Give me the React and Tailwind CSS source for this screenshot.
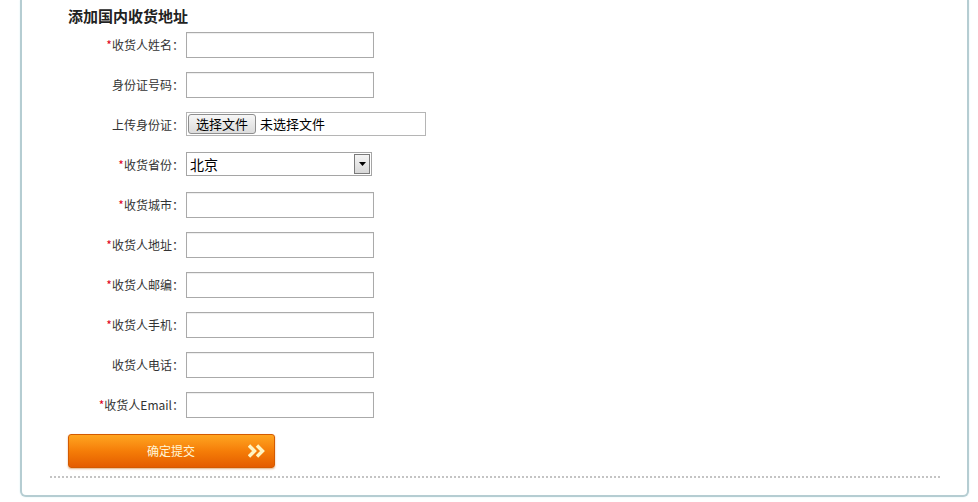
const fields = [
  { label: '收货人姓名', req: true },
  { label: '身份证号码', req: false },
  { label: '上传身份证', req: false, type: 'file' },
  { label: '收货省份', req: true, type: 'select' },
  { label: '收货城市', req: true },
  { label: '收货人地址', req: true },
  { label: '收货人邮编', req: true },
  { label: '收货人手机', req: true },
  { label: '收货人电话', req: false },
  { label: '收货人Email', req: true },
]

function Field({ type }) {
  if (type === 'file') {
    return (
      <div className="flex h-[24px] w-[240px] items-center border border-[#b5b5b5] bg-white pl-[1px]">
        <div className="flex h-[20px] items-center rounded-[3px] border border-[#8e8e8e] bg-gradient-to-b from-[#f6f6f6] to-[#dcdcdc] px-[7px] text-[13px] text-black">
          选择文件
        </div>
        <span className="ml-[4px] text-[13px] text-black">未选择文件</span>
      </div>
    )
  }
  if (type === 'select') {
    return (
      <div className="flex h-[24px] w-[186px] items-center justify-between border border-[#a5a5a5] bg-white pl-[3px] pr-[1px]">
        <span className="text-[14px] text-black">北京</span>
        <div className="flex h-[20px] w-[16px] items-center justify-center border border-[#7a7a7a] bg-gradient-to-b from-[#f4f4f4] to-[#d8d8d8]">
          <svg width="7" height="4" viewBox="0 0 7 4">
            <path d="M0 0h7L3.5 4z" fill="#000" />
          </svg>
        </div>
      </div>
    )
  }
  return <div className="h-[26px] w-[188px] border border-[#aaaaaa] bg-white shadow-[inset_0_1px_1px_#eeeeee]" />
}

export default function App() {
  return (
    <div className="h-[502px] w-[978px] overflow-hidden bg-white font-['Noto_Sans_CJK_SC','Liberation_Sans',sans-serif] text-[12px] text-[#333]">
      <div className="ml-[20px] h-[497px] w-[949px] rounded-b-[6px] border-x-[2px] border-b-[2px] border-[#b5cdd2] bg-white pl-[46px] shadow-[0_0_2px_#d8eef2]">
        <h3 className="pt-[6px] text-[15px] font-bold leading-[20px] text-[#222]">添加国内收货地址</h3>
        <div>
          {fields.map((f) => (
            <div key={f.label} className="flex h-[40px] items-start pt-[6px]">
              <label className="h-[26px] w-[118px] pr-[2px] text-right leading-[26px]">
                {f.req && <span className="text-[#e0001b]">*</span>}
                {f.label}：
              </label>
              <Field type={f.type} />
            </div>
          ))}
        </div>
        <button className="mt-[8px] flex h-[34px] w-[207px] items-center rounded-[3px] border border-[#d45a00] bg-gradient-to-b from-[#ffa51f] via-[#f57d08] to-[#e45c00] shadow-[0_1px_2px_#e0b080]">
          <span className="ml-[78px] text-[12px] text-[#fff6d8]">确定提交</span>
          <svg className="ml-[53px]" width="19" height="14" viewBox="0 0 19 14">
            <path d="M1 1.5L6.5 7L1 12.5M9 1.5L14.5 7L9 12.5" fill="none" stroke="#fff4c2" strokeWidth="3.4" strokeLinejoin="miter" />
          </svg>
        </button>
        <div className="-ml-[18px] mt-[8px] w-[890px] border-t-[2px] border-dotted border-[#c4c4c4]" />
      </div>
    </div>
  )
}
